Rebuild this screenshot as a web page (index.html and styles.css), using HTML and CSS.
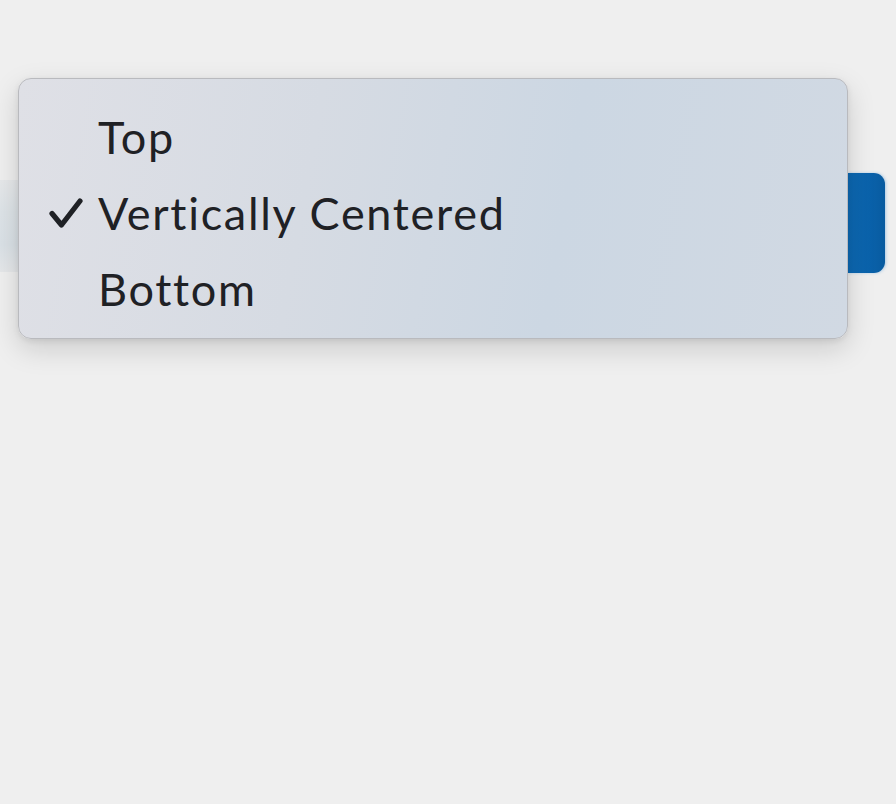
FILE: index.html
```html
<!DOCTYPE html>
<html>
<head>
<meta charset="utf-8">
<link rel="stylesheet" href="styles.css">
</head>
<body>
<div class="stage">
  <div class="popup-row">
    <div class="popup-button">
      <div class="popup-field"></div>
      <div class="popup-arrow"></div>
    </div>
  </div>
  <div class="menu" role="menu">
    <div class="menu-item" role="menuitemradio" aria-checked="false">
      <span class="check"></span><span class="label">Top</span>
    </div>
    <div class="menu-item" role="menuitemradio" aria-checked="true">
      <span class="check">
        <svg viewBox="0 0 34 32" width="34" height="32"><path d="M3 15.5 L12.5 27 L31 3" fill="none" stroke="#1f2125" stroke-width="5.2" stroke-linecap="round" stroke-linejoin="round"/></svg>
      </span><span class="label">Vertically Centered</span>
    </div>
    <div class="menu-item" role="menuitemradio" aria-checked="false">
      <span class="check"></span><span class="label">Bottom</span>
    </div>
  </div>
</div>
</body>
</html>
```
FILE: styles.css
```css
html, body {
  margin: 0;
  padding: 0;
}
body {
  background: #efefef;
  width: 896px;
  height: 804px;
  overflow: hidden;
  font-family: Lato, "Open Sans", sans-serif;
}
.stage {
  position: relative;
  width: 896px;
  height: 804px;
}
.popup-row {
  padding-top: 180px;
  display: flex;
}
.popup-button {
  display: flex;
  margin-left: -20px;
  width: 905px;
  height: 92px;
}
.popup-field {
  flex: 1;
  border-radius: 10px 0 0 10px;
  background: linear-gradient(180deg, #e6e8ea 0%, #dde3e7 35%, #dae1e6 70%, #e5e7e9 100%);
}
.popup-arrow {
  margin-top: -7px;
  height: 100px;
  width: 38px;
  background: linear-gradient(90deg, #0d69b3, #0a62ab 60%, #085ba0);
  border-radius: 0 11px 11px 0;
  box-shadow: 1px 0 3px rgba(90,160,220,0.45);
}
.menu {
  position: absolute;
  left: 18px;
  top: 78px;
  width: 830px;
  height: 261px;
  box-sizing: border-box;
  border: 1px solid #b9babe;
  border-radius: 13px;
  background: linear-gradient(100deg, #dfe0e6 0%, #d6dbe3 35%, #ccd7e3 65%, #d1d9e3 100%);
  box-shadow: 0 10px 28px rgba(0,0,0,0.15), 0 2px 6px rgba(0,0,0,0.08);
  padding-top: 20px;
}
.menu-item {
  display: flex;
  align-items: center;
  height: 76px;
  color: #1f2125;
  font-size: 45px;
  letter-spacing: 1.7px;
}
.check {
  width: 79px;
  display: flex;
  justify-content: flex-end;
}
.check svg {
  margin-right: 15px;
  margin-top: 2px;
}
.label {
  line-height: 1;
}
```
